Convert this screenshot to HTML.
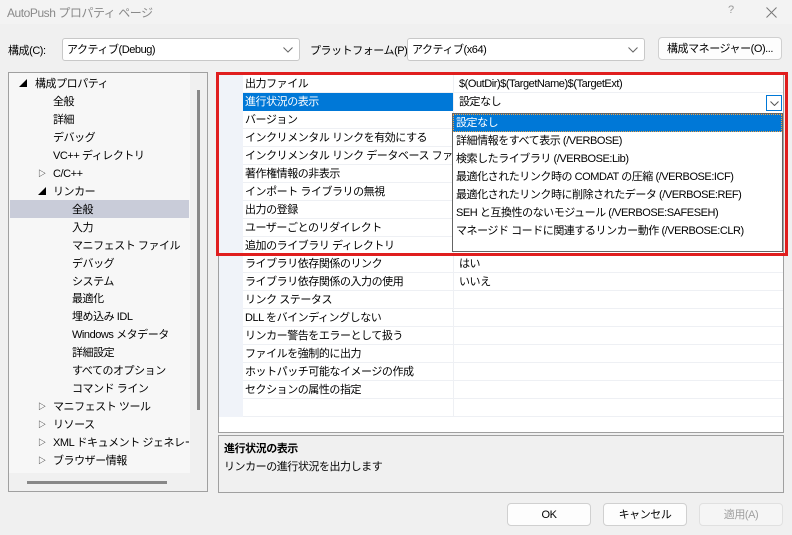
<!DOCTYPE html>
<html><head><meta charset="utf-8"><style>
*{margin:0;padding:0;box-sizing:border-box}
body{width:792px;height:535px;background:#f0f0f0;font-family:"Liberation Sans","Noto Sans CJK JP",sans-serif;font-size:11px;letter-spacing:-0.45px;color:#000;position:relative;overflow:hidden}
div,span{white-space:nowrap}
.a{position:absolute}
.t{line-height:20px;height:18px}
.combo{position:absolute;background:#fff;border:1px solid #c8c8c8;border-radius:3px;height:23px;line-height:22px;padding-left:4px}
.combo svg{position:absolute;right:6px;top:8px}
.btn{position:absolute;background:#fdfdfd;border:1px solid #d0d0d0;border-radius:4px;height:23px;line-height:22px;text-align:center}
.row{position:absolute;left:243px;width:540px;height:18px;border-bottom:1px solid #eef0f4;line-height:19px}
.row .n{position:absolute;left:2px;height:17px}
.row .v{position:absolute;left:210px;border-left:1px solid #eef0f4;height:17px;padding-left:5px;width:330px}
.dd div{height:18px;line-height:19px;padding-left:3px}
.tri{position:absolute;font-size:8px;line-height:18px;letter-spacing:0}
</style></head><body>
<div class="a" style="left:0;top:0;width:792px;height:24px;background:#f3f3f3"></div>
<div class="a" style="left:7px;top:4px;color:#8a8a8a;font-size:12px">AutoPush プロパティ ページ</div>
<div class="a" style="left:728px;top:4px;color:#999">?</div>
<svg class="a" style="left:766px;top:7px" width="11" height="11"><path d="M0.5 0.5L10.5 10.5M10.5 0.5L0.5 10.5" stroke="#777" stroke-width="1"/></svg>

<div class="a" style="left:8px;top:42px">構成(C):</div>
<div class="combo" style="left:62px;top:38px;width:238px">アクティブ(Debug)<svg width="10" height="6"><path d="M0.5 0.5L5 5L9.5 0.5" fill="none" stroke="#666"/></svg></div>
<div class="a" style="left:310px;top:42px">プラットフォーム(P):</div>
<div class="combo" style="left:407px;top:38px;width:238px">アクティブ(x64)<svg width="10" height="6"><path d="M0.5 0.5L5 5L9.5 0.5" fill="none" stroke="#666"/></svg></div>
<div class="btn" style="left:658px;top:37px;width:124px">構成マネージャー(O)...</div>

<!-- tree -->
<div class="a" style="left:8px;top:72px;width:200px;height:420px;border:1px solid #a0a0a0;background:#f0f0f0"></div>
<div class="a" style="left:9px;top:73px;width:181px;height:400px;background:#f7f7f7;overflow:hidden"></div>
<div class="a" style="left:10px;top:200px;width:179px;height:18px;background:#c9ccd9"></div>
<div class="a" style="left:197px;top:90px;width:3px;height:320px;background:#888"></div>
<div class="a" style="left:27px;top:481px;width:140px;height:3px;background:#888"></div>
<div class="tri" style="left:19px;top:75px">◢</div>
<div class="a t" style="left:35px;top:74px">構成プロパティ</div>
<div class="a t" style="left:53px;top:92px">全般</div>
<div class="a t" style="left:53px;top:110px">詳細</div>
<div class="a t" style="left:53px;top:128px">デバッグ</div>
<div class="a t" style="left:53px;top:146px">VC++ ディレクトリ</div>
<div class="tri" style="left:38px;top:165px">▷</div>
<div class="a t" style="left:53px;top:164px">C/C++</div>
<div class="tri" style="left:38px;top:183px">◢</div>
<div class="a t" style="left:53px;top:182px">リンカー</div>
<div class="a t" style="left:72px;top:200px">全般</div>
<div class="a t" style="left:72px;top:218px">入力</div>
<div class="a t" style="left:72px;top:236px">マニフェスト ファイル</div>
<div class="a t" style="left:72px;top:254px">デバッグ</div>
<div class="a t" style="left:72px;top:272px">システム</div>
<div class="a t" style="left:72px;top:289px">最適化</div>
<div class="a t" style="left:72px;top:307px">埋め込み IDL</div>
<div class="a t" style="left:72px;top:325px">Windows メタデータ</div>
<div class="a t" style="left:72px;top:343px">詳細設定</div>
<div class="a t" style="left:72px;top:361px">すべてのオプション</div>
<div class="a t" style="left:72px;top:379px">コマンド ライン</div>
<div class="tri" style="left:38px;top:398px">▷</div><div class="a t" style="left:53px;top:397px">マニフェスト ツール</div>
<div class="tri" style="left:38px;top:416px">▷</div><div class="a t" style="left:53px;top:415px">リソース</div>
<div class="tri" style="left:38px;top:434px">▷</div><div class="a t" style="left:53px;top:433px;width:136px;overflow:hidden">XML ドキュメント ジェネレーター</div>
<div class="tri" style="left:38px;top:452px">▷</div><div class="a t" style="left:53px;top:451px">ブラウザー情報</div>

<!-- grid -->
<div class="a" style="left:218px;top:72px;width:566px;height:361px;border:1px solid #a0a0a0;background:#fff"></div>
<div class="a" style="left:219px;top:73px;width:24px;height:344px;background:#f0f3f9"></div>
<div class="row" style="top:75px"><span class="n">出力ファイル</span><span class="v">$(OutDir)$(TargetName)$(TargetExt)</span></div>
<div class="row" style="top:93px;border:0"><span class="n" style="left:0;width:210px;background:#0078d7;color:#fff;padding-left:2px;height:18px">進行状況の表示</span><span class="v">設定なし</span></div>
<div class="a" style="left:766px;top:95px;width:16px;height:16px;border:1px solid #0078d7;background:#fff"><svg style="position:absolute;left:3px;top:5px" width="9" height="5"><path d="M0.5 0.5L4.5 4.5L8.5 0.5" fill="none" stroke="#555"/></svg></div>
<div class="row" style="top:111px"><span class="n">バージョン</span><span class="v"></span></div>
<div class="row" style="top:129px"><span class="n">インクリメンタル リンクを有効にする</span><span class="v"></span></div>
<div class="row" style="top:147px"><span class="n">インクリメンタル リンク データベース ファイル</span><span class="v"></span></div>
<div class="row" style="top:165px"><span class="n">著作権情報の非表示</span><span class="v"></span></div>
<div class="row" style="top:183px"><span class="n">インポート ライブラリの無視</span><span class="v"></span></div>
<div class="row" style="top:201px"><span class="n">出力の登録</span><span class="v"></span></div>
<div class="row" style="top:219px"><span class="n">ユーザーごとのリダイレクト</span><span class="v"></span></div>
<div class="row" style="top:237px"><span class="n">追加のライブラリ ディレクトリ</span><span class="v"></span></div>
<div class="row" style="top:255px"><span class="n">ライブラリ依存関係のリンク</span><span class="v">はい</span></div>
<div class="row" style="top:273px"><span class="n">ライブラリ依存関係の入力の使用</span><span class="v">いいえ</span></div>
<div class="row" style="top:291px"><span class="n">リンク ステータス</span><span class="v"></span></div>
<div class="row" style="top:309px"><span class="n">DLL をバインディングしない</span><span class="v"></span></div>
<div class="row" style="top:327px"><span class="n">リンカー警告をエラーとして扱う</span><span class="v"></span></div>
<div class="row" style="top:345px"><span class="n">ファイルを強制的に出力</span><span class="v"></span></div>
<div class="row" style="top:363px"><span class="n">ホットパッチ可能なイメージの作成</span><span class="v"></span></div>
<div class="row" style="top:381px"><span class="n">セクションの属性の指定</span><span class="v"></span></div>
<div class="row" style="top:399px"><span class="n"></span><span class="v"></span></div>

<!-- dropdown -->
<div class="a dd" style="left:452px;top:113px;width:331px;height:139px;background:#fff;border:1px solid #646464">
<div style="background:#0078d7;color:#fff;outline:1px dotted #f0a040;outline-offset:-1px">設定なし</div>
<div>詳細情報をすべて表示 (/VERBOSE)</div>
<div>検索したライブラリ (/VERBOSE:Lib)</div>
<div>最適化されたリンク時の COMDAT の圧縮 (/VERBOSE:ICF)</div>
<div>最適化されたリンク時に削除されたデータ (/VERBOSE:REF)</div>
<div>SEH と互換性のないモジュール (/VERBOSE:SAFESEH)</div>
<div>マネージド コードに関連するリンカー動作 (/VERBOSE:CLR)</div>
</div>

<!-- red box -->
<div class="a" style="left:216px;top:72px;width:572px;height:184px;border:3px solid #e01e1e"></div>

<!-- description -->
<div class="a" style="left:218px;top:435px;width:566px;height:58px;border:1px solid #a0a0a0;background:#f0f0f0"></div>
<div class="a" style="left:224px;top:440px;font-weight:bold">進行状況の表示</div>
<div class="a" style="left:224px;top:458px">リンカーの進行状況を出力します</div>

<div class="btn" style="left:507px;top:503px;width:84px">OK</div>
<div class="btn" style="left:603px;top:503px;width:84px">キャンセル</div>
<div class="btn" style="left:699px;top:503px;width:84px;color:#a0a0a0;background:#f5f5f5;border-color:#e0e0e0">適用(A)</div>
</body></html>
